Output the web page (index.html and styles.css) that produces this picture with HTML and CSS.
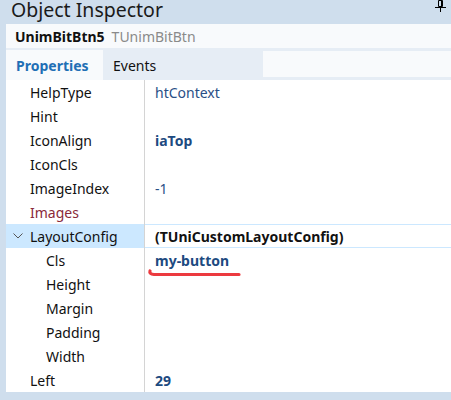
FILE: index.html
```html
<!DOCTYPE html>
<html>
<head>
<meta charset="utf-8">
<link rel="stylesheet" href="styles.css">
</head>
<body>
<div class="window">
  <div class="titlebar">
    <span class="title">Object Inspector</span>
    <svg class="pin" width="11" height="13" viewBox="0 0 11 13">
      <path d="M3.5 0.5 H7.5 V6.5 H3.5 Z" fill="none" stroke="#000" stroke-width="1"/>
      <path d="M6.5 1 V6" stroke="#000" stroke-width="1"/>
      <path d="M0 7.5 H11" stroke="#000" stroke-width="1"/>
      <path d="M5.5 8 V12" stroke="#000" stroke-width="1"/>
    </svg>
  </div>
  <div class="body">
    <div class="component"><b>UnimBitBtn5</b><span class="ctype">TUnimBitBtn</span></div>
    <div class="tabs">
      <div class="tab active">Properties</div>
      <div class="tab">Events</div>
      <div class="search"></div>
    </div>
    <div class="grid">
      <div class="row"><div class="name">HelpType</div><div class="val">htContext</div></div>
      <div class="row"><div class="name">Hint</div><div class="val"></div></div>
      <div class="row"><div class="name">IconAlign</div><div class="val bold">iaTop</div></div>
      <div class="row"><div class="name">IconCls</div><div class="val"></div></div>
      <div class="row"><div class="name">ImageIndex</div><div class="val">-1</div></div>
      <div class="row"><div class="name ref">Images</div><div class="val"></div></div>
      <div class="row sel"><div class="name"><svg class="chev" width="10" height="6" viewBox="0 0 10 6"><path d="M0.5 0.5 L5 5 L9.5 0.5" fill="none" stroke="#555" stroke-width="1"/></svg>LayoutConfig</div><div class="val black">(TUniCustomLayoutConfig)</div></div>
      <div class="row"><div class="name sub">Cls</div><div class="val bold mark">my-button<svg class="underline" width="96" height="10" viewBox="0 0 96 10"><path d="M3 3 Q2 6 7 6.5 L92 6.5" fill="none" stroke="#ec3a3f" stroke-width="3.2" stroke-linecap="round"/></svg></div></div>
      <div class="row"><div class="name sub">Height</div><div class="val"></div></div>
      <div class="row"><div class="name sub">Margin</div><div class="val"></div></div>
      <div class="row"><div class="name sub">Padding</div><div class="val"></div></div>
      <div class="row"><div class="name sub">Width</div><div class="val"></div></div>
      <div class="row"><div class="name">Left</div><div class="val bold">29</div></div>
    </div>
  </div>
</div>
</body>
</html>
```
FILE: styles.css
```css
* { box-sizing: border-box; }
html, body { margin: 0; padding: 0; }
body {
  width: 451px;
  height: 400px;
  overflow: hidden;
  background: #cfdeed;
  font-family: "Noto Sans", "Open Sans", sans-serif;
  font-size: 14px;
  color: #111;
}
.window { width: 451px; height: 400px; }
.titlebar {
  height: 24px;
  display: flex;
  align-items: center;
  justify-content: space-between;
  padding-left: 11px;
  padding-right: 5px;
  position: relative;
}
.title {
  font-size: 19.5px;
  line-height: 24px;
  color: #1a1a1a;
  margin-top: -5px;
}
.pin { align-self: flex-start; margin-top: 0px; }
.body { margin-left: 6px; }
.component {
  height: 24px;
  background: #f8fafc;
  display: flex;
  align-items: center;
  padding-left: 9px;
  font-size: 14px;
}
.component b { color: #111; font-weight: 700; }
.ctype { color: #8a8a8a; margin-left: 7px; }
.tabs {
  height: 32px;
  background: #e6edf5;
  display: flex;
  align-items: flex-end;
}
.tab {
  height: 30px;
  display: flex;
  align-items: center;
  padding: 0 10px 0 10px;
  color: #111;
}
.tab.active {
  background: #f8fafc;
  color: #1f6fb5;
  font-weight: 700;
  width: 97px;
}
.search {
  margin-left: auto;
  align-self: center;
  width: 188px;
  height: 26px;
  background: #f8fafc;
}
.grid { background: #fff; width: 445px; }
.row {
  height: 24px;
  display: flex;
  align-items: center;
}
.name {
  width: 139px;
  height: 24px;
  padding-left: 24px;
  display: flex;
  align-items: center;
  border-right: 1px solid #d4d4d4;
  color: #111;
}
.name.sub { padding-left: 40px; }
.name.ref { color: #8a2a3a; }
.val {
  flex: 1;
  height: 24px;
  display: flex;
  align-items: center;
  padding-left: 10px;
  color: #2a4f86;
  position: relative;
}
.val.bold { font-weight: 700; color: #1d4a80; }
.val.black { font-weight: 700; color: #111; }
.row.sel .name { background: #cce8ff; padding-left: 7px; }
.row.sel .val { border-top: 1px solid #cce8ff; border-bottom: 1px solid #cce8ff; }
.chev { margin-right: 7px; }
.underline { position: absolute; left: 2px; top: 20px; }
```
